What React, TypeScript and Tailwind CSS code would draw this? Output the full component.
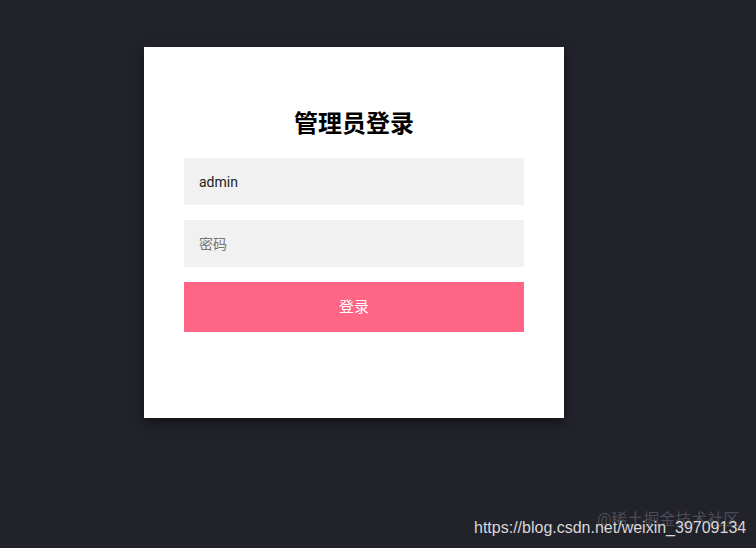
import React, { useState } from 'react';

export default function App() {
  const [user, setUser] = useState('admin');
  const [pwd, setPwd] = useState('');

  return (
    <div
      className="relative w-[756px] h-[548px] bg-[#22222b] overflow-hidden"
      style={{ fontFamily: 'Roboto, "Noto Sans CJK SC", sans-serif' }}
    >
      {/* Login card */}
      <div className="absolute left-[144px] top-[47px] w-[420px] h-[371px] bg-white shadow-[0_4px_10px_rgba(0,0,0,0.5)] pt-[61px] px-[40px]">
        <h2 className="text-[24px] leading-[32px] font-bold text-black text-center mb-[18px]">管理员登录</h2>
        <input
          type="text"
          value={user}
          onChange={(e) => setUser(e.target.value)}
          className="block w-full h-[47px] bg-[#f1f1f1] px-[15px] text-[14px] text-[#222] outline-none"
        />
        <input
          type="password"
          value={pwd}
          placeholder="密码"
          onChange={(e) => setPwd(e.target.value)}
          className="block w-full h-[47px] mt-[15px] bg-[#f1f1f1] px-[15px] text-[14px] text-[#222] placeholder:text-[#757575] outline-none"
        />
        <button className="block w-full h-[50px] mt-[15px] bg-[#ff6584] text-white text-[15px]">登录</button>
      </div>

      {/* Watermarks */}
      <div className="absolute left-[597px] top-[510px] text-[16px] leading-[20px] text-white/20">@稀土掘金技术社区</div>
      <div
        className="absolute left-[474px] top-[518px] text-[16px] leading-[20px] text-[#d8d8d8]"
        style={{ fontFamily: '"Liberation Sans", Arial, sans-serif' }}
      >
        https://blog.csdn.net/weixin_39709134
      </div>
    </div>
  );
}
